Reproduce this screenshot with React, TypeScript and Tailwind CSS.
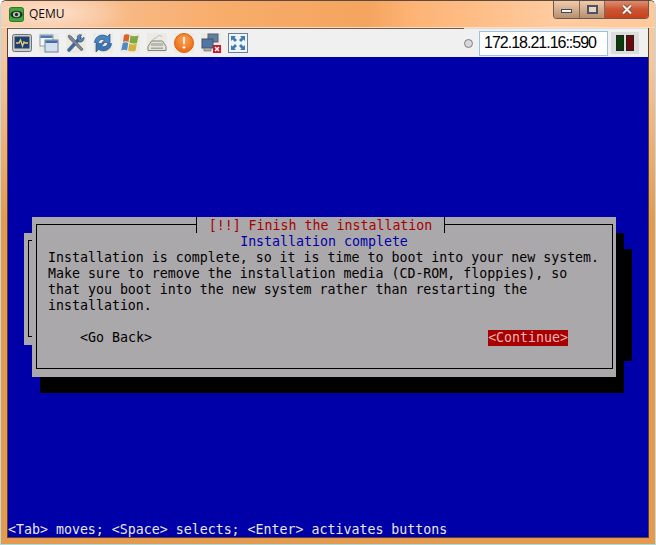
const tileClass = "flex h-5 w-5 items-center justify-center bg-[#ecebe3]";

const MonitorIcon = () => (
  <svg width="20" height="20" viewBox="0 0 20 20">
    <rect x="0.5" y="1.5" width="19" height="17" rx="2" fill="#c9cdd0" stroke="#6f7478" />
    <rect x="3" y="4" width="14" height="11" fill="#1c3d7c" stroke="#39424f" />
    <path d="M4 10h3l1.500-3 2 6 1.500-4 1 1h3" fill="none" stroke="#e4d36a" strokeWidth="1.300" />
  </svg>
);

const WindowsIcon = () => (
  <svg width="20" height="20" viewBox="0 0 20 20">
    <rect x="1" y="2" width="13" height="11" fill="#f4f6f8" stroke="#8b98a8" />
    <rect x="1.500" y="2.500" width="12" height="2.500" fill="#4a78b0" />
    <rect x="6" y="7" width="13" height="12" fill="#d5e0ee" stroke="#71839b" />
    <rect x="6.500" y="7.500" width="12" height="2.500" fill="#3f6da8" />
  </svg>
);

const ToolsIcon = () => (
  <svg width="20" height="20" viewBox="0 0 20 20">
    <path d="M3 17 14 5" stroke="#46699a" strokeWidth="3.600" strokeLinecap="round" />
    <path d="M11 3.500a4 4 0 0 1 5-1.500l-2.500 2.500 2 2L18 4a4 4 0 0 1-5 5z" fill="#5f83b3" stroke="#34527e" strokeWidth="0.600" />
    <path d="M3 2l2.500 1.500L17 16l-1.500 2L3.500 6 2 3z" fill="#7d8a96" stroke="#434c55" strokeWidth="0.600" />
  </svg>
);

const RefreshIcon = () => (
  <svg width="20" height="20" viewBox="0 0 20 20">
    <path d="M1.500 9.500C2 3.500 8.500 0 14.500 3.500L17 1v8.500H9l2.500-2.500C8.500 5.500 6 7 5.500 9.500z" fill="#4c83bd" stroke="#22558f" strokeWidth="0.700" />
    <path d="M18.500 10.500C18 16.500 11.500 20 5.500 16.500L3 19v-8.500h8L8.500 13c3 1.500 5.500 0 6-2.500z" fill="#3d74b0" stroke="#22558f" strokeWidth="0.700" />
  </svg>
);

const FlagIcon = () => (
  <svg width="20" height="20" viewBox="0 0 20 20">
    <path d="M4 2c2-1 4-1 5.500 0L8.500 9C6.500 8 5 8 3 9z" fill="#d9632f" />
    <path d="M10.500 2.500c2 1 5 1 8 0L17 10c-2 1-5 .7-7.500-.2z" fill="#7dac3e" />
    <path d="M2.800 10c2-1 3.500-1 5.500 0L7 17.500c-1.500-1-3.500-1-5.800 0z" fill="#4d89c9" />
    <path d="M9.300 10.700c2 1 5 1 7.500 0l-1.300 7c-2 1-5 .8-7.400-.2z" fill="#d3b13c" />
  </svg>
);

const KeyboardIcon = () => (
  <svg width="20" height="20" viewBox="0 0 20 20">
    <path d="M6 8c0-4 3-2 4-4s4-2 5 0" fill="none" stroke="#b5b5ac" />
    <path d="M4.500 8h11L19 13.500v4H1v-4z" fill="#e3e3da" stroke="#83837b" />
    <rect x="4" y="10" width="12" height="3" fill="#b9b9b0" />
    <rect x="4" y="14.500" width="12" height="1.500" fill="#a8a8a0" />
  </svg>
);

const AlertIcon = () => (
  <svg width="20" height="20" viewBox="0 0 20 20">
    <defs>
      <radialGradient id="alertFill" cx="50%" cy="35%" r="70%">
        <stop offset="0%" stopColor="#fba253" />
        <stop offset="100%" stopColor="#e8650f" />
      </radialGradient>
    </defs>
    <circle cx="10" cy="10" r="9.500" fill="url(#alertFill)" stroke="#d9640f" />
    <path d="M8.800 4h2.400l-.5 7.500H9.300z" fill="#fdf1e2" />
    <circle cx="10" cy="14.300" r="1.400" fill="#fdf1e2" />
  </svg>
);

const DisconnectIcon = () => (
  <svg width="20" height="20" viewBox="0 0 20 20">
    <rect x="7" y="1" width="10" height="8" fill="#5d7fa8" stroke="#5a6068" />
    <rect x="1" y="6" width="11" height="9" fill="#4e76a6" stroke="#4d5259" />
    <rect x="3" y="15" width="7" height="3" fill="#a8abad" stroke="#676b6f" strokeWidth="0.600" />
    <rect x="12" y="12" width="8" height="8" fill="#c9162a" />
    <path d="M14 14l4 4m0-4-4 4" stroke="#fff" strokeWidth="1.500" />
  </svg>
);

const FullscreenIcon = () => (
  <svg width="20" height="20" viewBox="0 0 20 20">
    <rect x="0.500" y="0.500" width="19" height="19" fill="#f2f5f8" stroke="#6a7f97" />
    <path d="M3 3h5L6.500 4.500 9 7 7 9 4.500 6.500 3 8zM17 3v5l-1.500-1.500L13 9l-2-2 2.500-2.500L12 3zM3 17v-5l1.500 1.500L7 11l2 2-2.500 2.500L8 17zM17 17h-5l1.500-1.500L11 13l2-2 2.500 2.500L17 12z" fill="#3e7cb5" />
  </svg>
);

const QemuIcon = () => (
  <svg width="15" height="15" viewBox="0 0 15 15">
    <rect x="0.500" y="0.500" width="14" height="14" rx="2" fill="#3fa63a" stroke="#2a7a2c" />
    <ellipse cx="7.500" cy="7.500" rx="6" ry="3.800" fill="#1e2c26" />
    <ellipse cx="7.500" cy="7.500" rx="3.600" ry="2.700" fill="#b9c8bb" />
    <circle cx="7.500" cy="7.500" r="1.700" fill="#1e2c26" />
  </svg>
);

const CloseGlyph = () => (
  <svg width="12" height="11" viewBox="0 0 12 11">
    <path d="M2 1.500 10 9.500M10 1.500 2 9.500" stroke="#6b3a2a" strokeWidth="3.600" />
    <path d="M2 1.500 10 9.500M10 1.500 2 9.500" stroke="#f6f1ea" strokeWidth="2.200" />
  </svg>
);

const toolIcons = [
  MonitorIcon,
  WindowsIcon,
  ToolsIcon,
  RefreshIcon,
  FlagIcon,
  KeyboardIcon,
  AlertIcon,
  DisconnectIcon,
  FullscreenIcon,
];

const WindowButtons = () => (
  <div className="flex h-[18px] overflow-hidden rounded-b-[4px] border border-t-0 border-[#6d5a4c]">
    <div className="flex w-[26px] items-center justify-center border-r border-[#7d6a5a] bg-gradient-to-b from-[#f2cbac] to-[#b59070]">
      <div className="mt-[3px] h-[4px] w-[11px] border border-[#3f4a57] bg-[#f4f4f4]" />
    </div>
    <div className="flex w-[25px] items-center justify-center border-r border-[#7d6a5a] bg-gradient-to-b from-[#f2cbac] to-[#b59070]">
      <div className="h-[9px] w-[11px] border-2 border-[#4a5564] bg-[#e8d4c0]" />
    </div>
    <div className="flex w-[43px] items-center justify-center bg-gradient-to-b from-[#df8c70] via-[#cb5532] to-[#c8401c]">
      <CloseGlyph />
    </div>
  </div>
);

const Toolbar = () => (
  <div className="flex h-[29px] bg-[#f0f0f0]">
    <div className="flex flex-1 items-center gap-[7px] border-t border-[#6b5b50] pl-1">
      {toolIcons.map((Icon, i) => (
        <div key={i} className={tileClass}>
          <Icon />
        </div>
      ))}
    </div>
    <div className="flex items-center border-t border-[#dcdcdc] pr-[9px]">
      <div className="mr-[6px] h-[9px] w-[9px] rounded-full border border-[#808080] bg-[#d8d8d8]" />
      <div className="flex h-[25px] w-[129px] items-center overflow-hidden border border-[#9fc0dc] bg-white pl-1 text-[16px] tracking-[-1px] whitespace-nowrap text-black [font-family:'Liberation_Sans',sans-serif]">
        172.18.21.16::590
      </div>
      <div className="ml-[3px] flex h-[22px] w-7 items-center justify-center gap-[2px] bg-[#dcdcdc]">
        <div className="h-4 w-2 border border-[#222] bg-[#064006]" />
        <div className="h-4 w-2 border border-[#222] bg-[#700808]" />
      </div>
    </div>
  </div>
);

const Dialog = () => (
  <div className="relative mx-4 h-[176px]">
    {/* widgets of the dialog behind */}
    <div className="absolute top-4 left-0 h-[112px] w-2 bg-[#aaa8ab]">
      <div className="absolute top-[7px] left-1 h-[97px] w-1 border-y border-l border-black" />
    </div>
    <div className="absolute top-4 right-2 h-36 w-2 bg-black" />
    <div className="absolute top-8 right-0 h-[112px] w-2 bg-black" />
    <div className="absolute top-[160px] right-2 left-4 h-4 bg-black" />
    {/* dialog */}
    <div className="absolute top-0 right-4 left-2 flex h-40 flex-col bg-[#aaa8ab] pt-[17px] pr-4 pl-4 text-black">
      <div className="pointer-events-none absolute top-[7px] right-[3px] bottom-2 left-1 border border-black" />
      <div className="absolute top-0 right-[171px] left-[164px] flex h-4 justify-center whitespace-pre bg-[#aaa8ab] pt-px text-[#a80000]">
        <div className="absolute top-0 left-0 h-4 w-px bg-black" />
        [!!] Finish the installation
        <div className="absolute top-0 right-0 h-4 w-px bg-black" />
      </div>
      <p className="text-center text-[#0000a8]">Installation complete</p>
      <p className="whitespace-pre">{"Installation is complete, so it is time to boot into your new system.\nMake sure to remove the installation media (CD-ROM, floppies), so\nthat you boot into the new system rather than restarting the\ninstallation."}</p>
      <div className="relative z-10 mt-4 flex justify-between pr-8 pl-8">
        <span>&lt;Go Back&gt;</span>
        <span className="bg-[#a80000] text-[#e8b8b8]">&lt;Continue&gt;</span>
      </div>
    </div>
  </div>
);

export default function App() {
  return (
    <div className="flex h-[545px] w-[656px] flex-col overflow-hidden rounded-t-[6px] border-x border-t border-b border-x-[#b9dde0] border-t-[#5b4a40] border-b-[#a8dde0] bg-gradient-to-b from-[#f6c8a2] from-[10%] to-[#e59a50] to-[40%]">
      <div className="flex h-[27px] shrink-0 items-start border-b border-[#ffdcbc] bg-[radial-gradient(ellipse_80px_24px_at_50px_12px,#fde0cc_0%,#fde0cc00_100%),linear-gradient(90deg,#f7c8a4_0%,#f8ad6c_33%,#f4a45e_56%,#fdb273_62%,#ffcb9f_85%,#ffc99c_100%)] pl-2">
        <div className="mt-[6px]">
          <QemuIcon />
        </div>
        <span className="mt-[5px] ml-[5px] text-[12px] leading-4 text-[#0c0c0c] [font-family:'Open_Sans',sans-serif]">QEMU</span>
        <div className="mr-[6px] ml-auto">
          <WindowButtons />
        </div>
      </div>
      <div className="mx-[6px] flex flex-1 flex-col border-x border-b border-[#5a4030]">
        <Toolbar />
        <div className="flex flex-1 flex-col bg-[#0000a8] pt-40 text-[13.28px] leading-4 [font-family:'DejaVu_Sans_Mono',monospace]">
          <Dialog />
          <p className="mt-auto -mb-px whitespace-pre text-[#e8e8e8]">&lt;Tab&gt; moves; &lt;Space&gt; selects; &lt;Enter&gt; activates buttons</p>
        </div>
      </div>
      <div className="h-[6px] shrink-0" />
    </div>
  );
}
